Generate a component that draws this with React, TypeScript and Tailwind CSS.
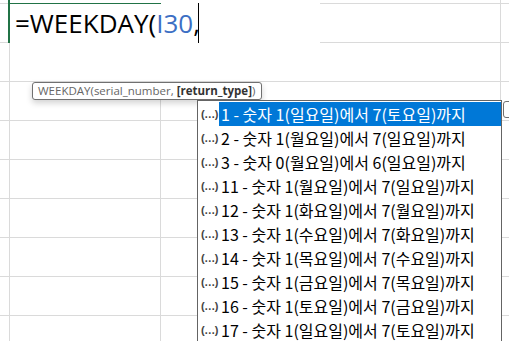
const rows = [
  "1 - 숫자 1(일요일)에서 7(토요일)까지",
  "2 - 숫자 1(월요일)에서 7(일요일)까지",
  "3 - 숫자 0(월요일)에서 6(일요일)까지",
  "11 - 숫자 1(월요일)에서 7(일요일)까지",
  "12 - 숫자 1(화요일)에서 7(월요일)까지",
  "13 - 숫자 1(수요일)에서 7(화요일)까지",
  "14 - 숫자 1(목요일)에서 7(수요일)까지",
  "15 - 숫자 1(금요일)에서 7(목요일)까지",
  "16 - 숫자 1(토요일)에서 7(금요일)까지",
  "17 - 숫자 1(일요일)에서 7(토요일)까지",
];

const GridRow = ({ h }: { h: string }) => (
  <div className={`flex ${h} border-b border-[#dadada] shrink-0`}>
    <div className="w-[10px] border-r border-[#dadada] shrink-0" />
    <div className="w-[151px] border-r border-[#dadada] shrink-0" />
    <div className="w-[340px] border-r border-[#dadada] shrink-0" />
    <div className="flex-1" />
  </div>
);

export default function App() {
  return (
    <div className="relative w-[509px] h-[341px] overflow-hidden bg-white">
      {/* sheet grid */}
      <div className="flex flex-col">
        <GridRow h="h-[4px]" />
        {Array.from({ length: 9 }).map((_, i) => (
          <GridRow key={i} h="h-[39px]" />
        ))}
      </div>

      {/* in-cell editor */}
      <div className="absolute left-[10px] top-0 w-[310px] h-[81px] bg-white" />
      <div className="absolute left-[8px] top-0 w-[2px] h-[43px] bg-[#217346]" />
      <div className="absolute left-[8px] top-[3px] w-[153px] h-px bg-[#217346]" />
      <div
        className="absolute left-[15px] top-[3px] h-[40px] flex items-center text-[26px] leading-none text-black whitespace-nowrap"
        style={{ fontFamily: '"Open Sans", "Noto Sans", sans-serif' }}
      >
        <span>=WEEKDAY(</span>
        <span className="text-[#3c6fc4]">I30</span>
        <span>,</span>
      </div>
      <div className="absolute left-[198px] top-[3px] w-px h-[40px] bg-black" />

      {/* argument tooltip */}
      <div
        className="absolute left-[32px] top-[82px] w-[230px] h-[18px] border border-[#707070] rounded-[3px] bg-white shadow-[0_3px_6px_rgba(0,0,0,0.18)] flex items-center pl-[5px] text-[11.5px] text-[#666] whitespace-nowrap"
        style={{ fontFamily: '"Open Sans", "Noto Sans", sans-serif' }}
      >
        WEEKDAY(serial_number,&nbsp;
        <span className="font-bold text-[#333]">[return_type]</span>)
      </div>

      {/* autocomplete list */}
      <div className="absolute left-[197px] top-[100px] w-[305px] h-[260px] border border-[#646464] bg-white pt-px">
        {rows.map((r, i) => (
          <div key={i} className="flex h-[24px] items-center">
            <span
              className="w-[21px] pl-[3px] shrink-0 text-[11px] font-bold text-[#444] tracking-[-0.5px]"
              style={{ fontFamily: '"Liberation Sans", sans-serif' }}
            >
              (…)
            </span>
            <div
              className={`flex-1 h-full flex items-center pl-[2px] text-[16px] whitespace-nowrap ${
                i === 0 ? "bg-[#0078d7] text-white" : "text-black"
              }`}
              style={{ fontFamily: '"Noto Sans CJK KR", "Noto Sans", sans-serif' }}
            >
              {r}
            </div>
          </div>
        ))}
      </div>
      <div className="absolute left-[503px] top-[101px] w-[20px] h-[17px] border border-[#707070] rounded-[3px] bg-white" />
    </div>
  );
}
